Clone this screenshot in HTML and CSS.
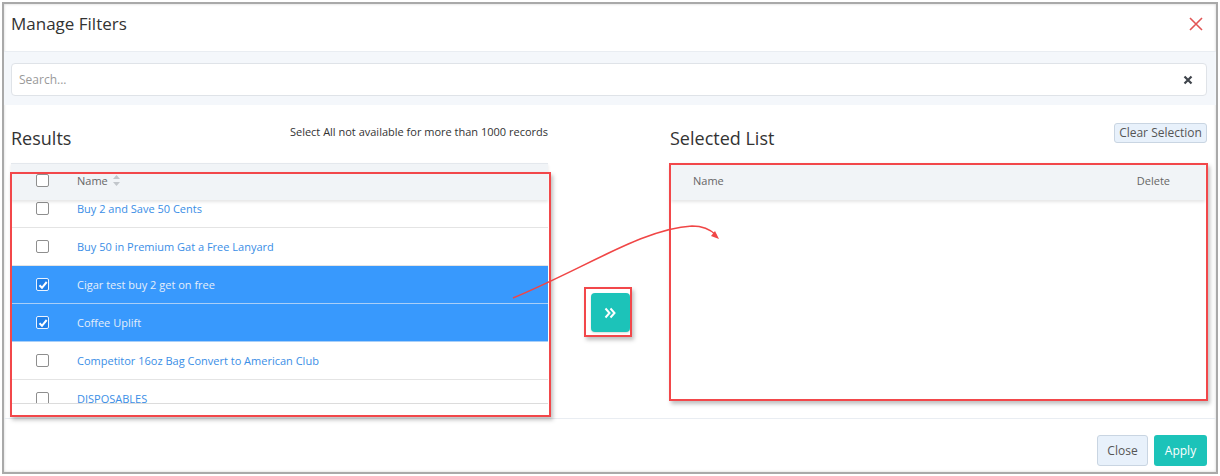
FILE: index.html
```html
<!DOCTYPE html>
<html lang="en">
<head>
    <meta charset="UTF-8">
    <title>Manage Filters</title>
    <link rel="stylesheet" href="styles.css">
</head>
<body>
    <div class="modal">
        <div class="modal-header">
            <h1 class="modal-title">Manage Filters</h1>
            <button class="close-x" aria-label="Close">
                <svg width="14" height="14" viewBox="0 0 14 14"><path d="M1 1 L13 13 M13 1 L1 13" stroke="#e25555" stroke-width="1.6" fill="none"/></svg>
            </button>
        </div>

        <div class="search-band">
            <div class="search-box">
                <input type="text" placeholder="Search...">
                <svg class="search-clear" width="10" height="10" viewBox="0 0 10 10"><path d="M1.5 1.5 L8.5 8.5 M8.5 1.5 L1.5 8.5" stroke="#3f444b" stroke-width="2.2" fill="none"/></svg>
            </div>
        </div>

        <div class="modal-body">
            <div class="column">
                <div class="column-head">
                    <h2 class="column-title">Results</h2>
                    <span class="note">Select All not available for more than 1000 records</span>
                </div>
                <div class="table">
                    <div class="table-header">
                        <span class="check-cell"><span class="checkbox"></span></span>
                        <span>Name</span>
                        <svg class="sort" width="7" height="11" viewBox="0 0 7 11"><path d="M3.5 0 L7 4 L0 4 Z M3.5 11 L7 7 L0 7 Z" fill="#c2c6cb"/></svg>
                    </div>
                    <div class="rows">
                        <div class="row-list">
                            <div class="row"><span class="check-cell"><span class="checkbox"></span></span><a href="#">Buy 2 and Save 50 Cents</a></div>
                            <div class="row"><span class="check-cell"><span class="checkbox"></span></span><a href="#">Buy 50 in Premium Gat a Free Lanyard</a></div>
                            <div class="row selected"><span class="check-cell"><span class="checkbox checked"><svg width="10" height="10" viewBox="0 0 10 10"><path d="M1.5 5.2 L4 7.8 L8.7 2" stroke="#fff" stroke-width="2" fill="none"/></svg></span></span><a href="#">Cigar test buy 2 get on free</a></div>
                            <div class="row selected"><span class="check-cell"><span class="checkbox checked"><svg width="10" height="10" viewBox="0 0 10 10"><path d="M1.5 5.2 L4 7.8 L8.7 2" stroke="#fff" stroke-width="2" fill="none"/></svg></span></span><a href="#">Coffee Uplift</a></div>
                            <div class="row"><span class="check-cell"><span class="checkbox"></span></span><a href="#">Competitor 16oz Bag Convert to American Club</a></div>
                            <div class="row"><span class="check-cell"><span class="checkbox"></span></span><a href="#">DISPOSABLES</a></div>
                        </div>
                    </div>
                </div>
            </div>

            <div class="middle">
                <button class="move-button" aria-label="Add selected">
                    <svg width="12" height="12" viewBox="0 0 12 12"><path d="M1.5 1.5 L5.5 6 L1.5 10.5 M6.5 1.5 L10.5 6 L6.5 10.5" stroke="#fff" stroke-width="2" fill="none"/></svg>
                </button>
            </div>

            <div class="column">
                <div class="column-head">
                    <h2 class="column-title">Selected List</h2>
                    <button class="light-button small">Clear Selection</button>
                </div>
                <div class="table selected-table">
                    <div class="table-header split">
                        <span>Name</span>
                        <span>Delete</span>
                    </div>
                    <div class="empty-body"></div>
                </div>
            </div>
        </div>

        <div class="modal-footer">
            <button class="light-button">Close</button>
            <button class="apply-button">Apply</button>
        </div>
    </div>

    <!-- annotation layer drawn over the screenshot -->
    <div class="mark mark-results"></div>
    <div class="mark mark-selected"></div>
    <div class="mark mark-button"></div>
    <svg class="arrow" width="1220" height="476" viewBox="0 0 1220 476">
        <path d="M513 298 C 585 268, 645 228, 692 226 C 704 226, 711 230, 716 235" stroke="#f04646" stroke-width="1.6" fill="none"/>
        <path d="M711 236 L719 239 L715 231 Z" fill="#f04646"/>
    </svg>
</body>
</html>
```

FILE: styles.css
```css
* {
    box-sizing: border-box;
}

body {
    margin: 0;
    font-family: 'Open Sans', 'Liberation Sans', sans-serif;
    color: #333;
    background: #fff;
    position: relative;
    width: 1220px;
    height: 476px;
    overflow: hidden;
}

button {
    font-family: inherit;
    cursor: pointer;
}

.modal {
    margin: 2px;
    width: 1216px;
    height: 472px;
    border: 2px solid #a9a9a9;
    box-shadow: inset 0 0 3px rgba(0, 0, 0, 0.18);
    background: #fff;
    display: flex;
    flex-direction: column;
}

.modal-header {
    height: 48px;
    border-bottom: 1px solid #e9edf2;
    display: flex;
    justify-content: space-between;
    align-items: flex-start;
    padding: 8px 13px 0 7px;
}

.modal-title {
    margin: 0;
    font-size: 17px;
    font-weight: 400;
    line-height: 24px;
    color: #333;
}

.close-x {
    border: none;
    background: none;
    padding: 0;
    margin-top: 5px;
    display: flex;
}

.search-band {
    background: #f4f7fb;
    padding: 11px 9px 9px 7px;
}

.search-box {
    height: 33px;
    border: 1px solid #dfe3e8;
    border-radius: 4px;
    background: #fff;
    display: flex;
    align-items: center;
    padding: 0 13px 0 7px;
}

.search-box input {
    flex: 1;
    border: none;
    outline: none;
    font-family: inherit;
    font-size: 12px;
    color: #333;
    padding: 0;
}

.search-box input::placeholder {
    color: #9a9a9a;
}

.modal-body {
    flex: 1;
    display: grid;
    grid-template-columns: 537px 122px 1fr;
    padding: 18px 9px 14px 7px;
}

.column-head {
    height: 40px;
    display: flex;
    justify-content: space-between;
    align-items: flex-start;
}

.column-title {
    margin: 2px 0 0;
    font-size: 18px;
    font-weight: 400;
    line-height: 26px;
    color: #333;
}

.note {
    font-size: 11px;
    line-height: 16px;
    margin-top: 1px;
    color: #333;
}

.table-header {
    height: 37px;
    border-top: 1px solid #e4e8ed;
    background: #f1f4f7;
    display: flex;
    align-items: center;
    padding-bottom: 4px;
    font-size: 11px;
    color: #666;
    position: relative;
    z-index: 1;
    box-shadow: 0 2px 3px rgba(0, 0, 0, 0.1);
}

.table-header.split {
    justify-content: space-between;
    padding: 0 35px 4px 22px;
}

.sort {
    margin-left: 5px;
}

.check-cell {
    width: 66px;
    padding-left: 25px;
    display: flex;
    align-items: center;
    flex-shrink: 0;
}

.checkbox {
    width: 13px;
    height: 13px;
    border: 1px solid #8e8e8e;
    border-radius: 2px;
    background: #fff;
    display: flex;
    align-items: center;
    justify-content: center;
}

.checkbox.checked {
    background: #1f7fe8;
    border-color: #e9f3ff;
}

.rows {
    height: 204px;
    overflow: hidden;
    border-bottom: 1px solid #dcdcdc;
}

.row-list {
    margin-top: -10px;
}

.row {
    height: 38px;
    border-bottom: 1px solid #e4e4e4;
    display: flex;
    align-items: center;
    font-size: 11px;
}

.row a {
    color: #3a8ee6;
    text-decoration: none;
}

.row.selected {
    background: #3899fd;
    border-bottom-color: #a9cff8;
}

.row.selected a {
    color: #e4eefa;
}

.middle {
    display: flex;
    justify-content: center;
    padding-top: 170px;
    padding-left: 2px;
}

.move-button {
    width: 39px;
    height: 39px;
    border: none;
    border-radius: 4px;
    background: #1cc3b9;
    display: flex;
    align-items: center;
    justify-content: center;
    box-shadow: 0 1px 2px rgba(0, 0, 0, 0.15);
}

.selected-table {
    margin-left: 1px;
    margin-right: 2px;
}

.empty-body {
    height: 198px;
    background: #fff;
}

.light-button {
    background: #e8f1fb;
    border: 1px solid #c9d5e2;
    border-radius: 3px;
    color: #555;
    font-size: 12px;
    height: 31px;
    width: 51px;
    padding: 0;
}

.light-button.small {
    width: 93px;
    height: 20px;
    line-height: 18px;
}

.apply-button {
    background: #1cc3b9;
    border: none;
    border-radius: 3px;
    color: #fff;
    font-size: 12px;
    height: 31px;
    width: 53px;
    padding: 0;
}

.modal-footer {
    border-top: 1px solid #e9edf2;
    height: 54px;
    display: flex;
    justify-content: flex-end;
    align-items: flex-start;
    gap: 6px;
    padding: 16px 9px 0 0;
}

/* annotation overlay */
.mark {
    position: absolute;
    border: 2px solid #f2474a;
    box-shadow: 2px 3px 4px rgba(0, 0, 0, 0.25);
    z-index: 2;
    pointer-events: none;
}

.mark-results {
    left: 10px;
    top: 172px;
    width: 541px;
    height: 245px;
}

.mark-selected {
    left: 669px;
    top: 163px;
    width: 539px;
    height: 238px;
}

.mark-button {
    left: 584px;
    top: 287px;
    width: 48px;
    height: 50px;
}

.arrow {
    position: absolute;
    left: 0;
    top: 0;
    z-index: 3;
    pointer-events: none;
}
```
